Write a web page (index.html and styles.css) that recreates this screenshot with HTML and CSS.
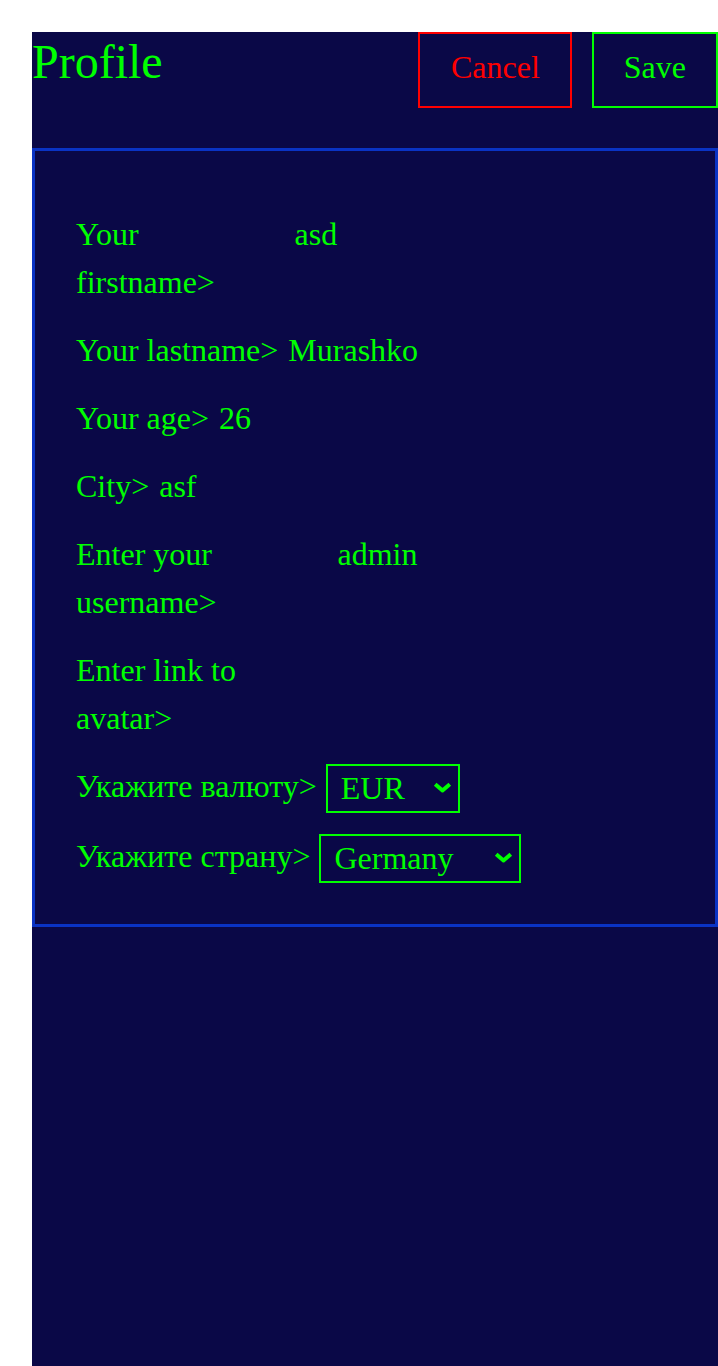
FILE: index.html
```html
<!DOCTYPE html>
<html lang="en">
<head>
<meta charset="utf-8">
<title>Profile</title>
<link rel="stylesheet" href="styles.css">
</head>
<body>
<div class="page">
  <header class="header">
    <h1 class="title">Profile</h1>
    <div class="actions">
      <button class="btn btn-cancel">Cancel</button>
      <button class="btn btn-save">Save</button>
    </div>
  </header>
  <form class="profile-form">
    <div class="row">
      <label class="label">Your firstname&gt;</label>
      <input class="value" type="text" value="asd">
    </div>
    <div class="row">
      <label class="label">Your lastname&gt;</label>
      <input class="value" type="text" value="Murashko">
    </div>
    <div class="row">
      <label class="label">Your age&gt;</label>
      <input class="value" type="text" value="26">
    </div>
    <div class="row">
      <label class="label">City&gt;</label>
      <input class="value" type="text" value="asf">
    </div>
    <div class="row">
      <label class="label">Enter your username&gt;</label>
      <input class="value" type="text" value="admin">
    </div>
    <div class="row">
      <label class="label">Enter link to avatar&gt;</label>
      <input class="value" type="text" value="">
    </div>
    <div class="row row-select">
      <label class="label">Укажите валюту&gt;</label>
      <span class="select-wrap">
        <select class="select select-currency">
          <option>EUR</option>
          <option>USD</option>
          <option>RUB</option>
        </select>
        <svg class="chevron" width="19" height="11" viewBox="0 0 19 11"><path d="M2.2 2.2 L9.5 8.4 L16.8 2.2" fill="none" stroke="#00ff00" stroke-width="4" stroke-linejoin="round"/></svg>
      </span>
    </div>
    <div class="row row-select row-select-last">
      <label class="label">Укажите страну&gt;</label>
      <span class="select-wrap">
        <select class="select select-country">
          <option>Germany</option>
          <option>Russia</option>
          <option>France</option>
        </select>
        <svg class="chevron" width="19" height="11" viewBox="0 0 19 11"><path d="M2.2 2.2 L9.5 8.4 L16.8 2.2" fill="none" stroke="#00ff00" stroke-width="4" stroke-linejoin="round"/></svg>
      </span>
    </div>
  </form>
</div>
</body>
</html>
```

FILE: styles.css
```css
html, body {
  margin: 0;
  padding: 0;
  background: #ffffff;
}

body {
  font-family: "Liberation Serif", "Times New Roman", serif;
  overflow: hidden;
}

.page {
  margin: 32px 0 0 32px;
  min-height: 100vh;
  background: #0a0847;
  color: #00ff00;
}

.header {
  display: flex;
  justify-content: space-between;
  align-items: flex-start;
}

.title {
  margin: 0;
  padding-top: 2px;
  font-size: 48px;
  font-weight: normal;
  color: #00ff00;
}

.actions {
  display: flex;
  gap: 20px;
}

.btn {
  font-family: inherit;
  font-size: 32px;
  line-height: 37px;
  padding: 15px 30px 20px;
  background: transparent;
  border: 2px solid #00ff00;
  color: #00ff00;
  cursor: pointer;
}

.btn-cancel {
  padding-left: 31px;
  border-color: #ff0000;
  color: #ff0000;
}

.profile-form {
  margin-top: 40px;
  border: 3px solid #0a33c4;
  padding: 39px 40px 41px 41px;
}

.row {
  display: flex;
  align-items: flex-start;
  gap: 10px;
  margin-top: 20px;
  font-size: 32px;
  line-height: 48px;
}

.label {
  min-width: 0;
}

.value {
  width: 382px;
  min-width: 0;
  height: 48px;
  padding: 0;
  border: 0;
  margin: 0;
  background: transparent;
  color: #00ff00;
  font-family: inherit;
  font-size: 32px;
  line-height: 48px;
  outline: none;
}

.row-select {
  gap: 9px;
}

.row-select-last {
  margin-top: 19px;
}

.select-wrap {
  position: relative;
  display: inline-block;
  flex-shrink: 0;
  margin-top: 2px;
  height: 49px;
}

.select {
  appearance: none;
  -webkit-appearance: none;
  box-sizing: border-box;
  height: 49px;
  margin: 0;
  padding: 4px 40px 4px 13px;
  border: 2px solid #00ff00;
  border-radius: 0;
  background: transparent;
  color: #00ff00;
  font-family: "Liberation Serif", "Times New Roman", serif;
  font-size: 32px;
  line-height: 37px;
}

.select option {
  background: #0a0847;
  color: #00ff00;
}

.select-currency {
  width: 134px;
}

.select-country {
  width: 202px;
}

.chevron {
  position: absolute;
  right: 8px;
  top: 18px;
  pointer-events: none;
}
```
